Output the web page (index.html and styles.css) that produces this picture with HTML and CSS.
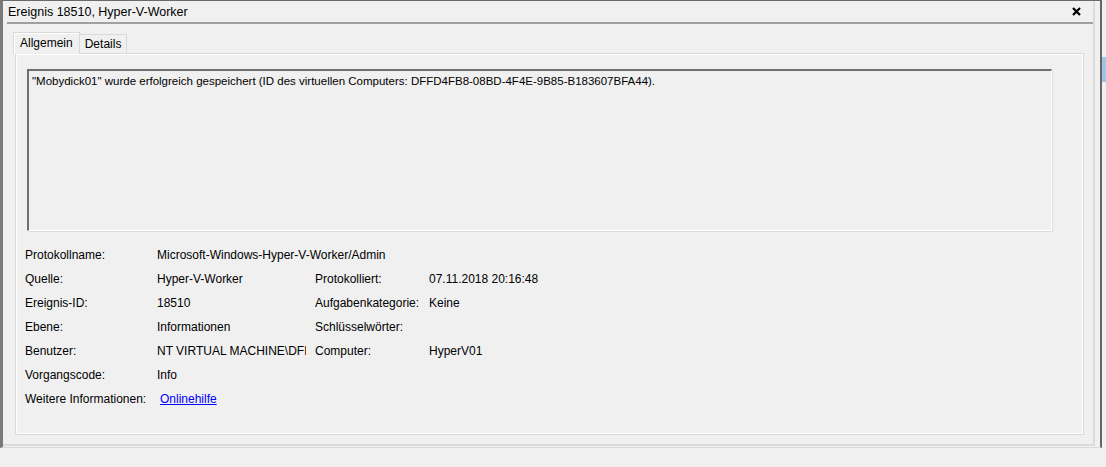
FILE: index.html
```html
<!DOCTYPE html>
<html lang="de">
<head>
  <meta charset="UTF-8" />
  <title>Ereignis 18510, Hyper-V-Worker</title>
  <link rel="stylesheet" href="styles.css">
</head>
<body>
  <div class="pane">
    <div class="frame">
      <div class="titlebar">
        <span class="title">Ereignis 18510, Hyper-V-Worker</span>
        <svg class="close" width="9" height="9" viewBox="0 0 9 9">
          <path d="M1 1 L8 8 M8 1 L1 8" stroke="#000" stroke-width="2.2" />
        </svg>
      </div>

      <div class="tabs">
        <div class="tab active">Allgemein</div>
        <div class="tab">Details</div>
      </div>

      <div class="panel">
        <div class="message">"Mobydick01" wurde erfolgreich gespeichert (ID des virtuellen Computers: DFFD4FB8-08BD-4F4E-9B85-B183607BFA44).</div>

        <div class="fields">
          <div class="label">Protokollname:</div>
          <div class="value wide">Microsoft-Windows-Hyper-V-Worker/Admin</div>

          <div class="label">Quelle:</div>
          <div class="value">Hyper-V-Worker</div>
          <div class="label">Protokolliert:</div>
          <div class="value">07.11.2018 20:16:48</div>

          <div class="label">Ereignis-ID:</div>
          <div class="value">18510</div>
          <div class="label">Aufgabenkategorie:</div>
          <div class="value">Keine</div>

          <div class="label">Ebene:</div>
          <div class="value">Informationen</div>
          <div class="label">Schlüsselwörter:</div>
          <div class="value"></div>

          <div class="label">Benutzer:</div>
          <div class="value clip">NT VIRTUAL MACHINE\DFFD4FB8-08BD</div>
          <div class="label">Computer:</div>
          <div class="value">HyperV01</div>

          <div class="label">Vorgangscode:</div>
          <div class="value wide">Info</div>

          <div class="label">Weitere Informationen:</div>
          <div class="value wide"><a href="#" class="link">Onlinehilfe</a></div>
        </div>
      </div>
    </div>
  </div>
  <div class="sidebar">
    <div class="thumb"></div>
  </div>
</body>
</html>
```

FILE: styles.css
```css
body {
  margin: 0;
  background: #f0f0f0;
  font-family: "Liberation Sans", Arial, sans-serif;
  font-size: 12px;
  color: #000;
  display: flex;
  align-items: flex-start;
}
.pane {
  width: 1097px;
  height: 446px;
  border-top: 1px solid #6a6a6a;
  border-left: 3px solid #7a7a7a;
  border-right: 2px solid #666;
  border-bottom: 1px solid #dadada;
}
.frame {
  height: 443px;
  margin-right: 5px;
  border-right: 2px solid #dcdcdc;
  border-bottom: 2px solid #dcdcdc;
  display: flex;
  flex-direction: column;
}
.titlebar {
  height: 21px;
  margin-left: 4px;
  padding: 0 12px 0 1px;
  border-bottom: 2px solid #a0a0a0;
  display: flex;
  align-items: center;
  justify-content: space-between;
}
.title {
  font-size: 12.5px;
  padding-top: 1px;
}
.tabs {
  display: flex;
  align-items: flex-end;
  margin: 8px 0 0 10px;
  height: 21px;
}
.tab {
  height: 18px;
  padding: 0 5px;
  line-height: 18px;
  border: 1px solid #d9d9d9;
  border-bottom: none;
  border-left: none;
  background: #f0f0f0;
}
.tab.active {
  height: 21px;
  line-height: 20px;
  padding: 0 6px;
  border-left: 1px solid #d9d9d9;
  box-shadow: inset 1px 1px 0 #fff;
  position: relative;
  top: 1px;
}
.panel {
  margin: 0 9px 0 12px;
  height: 365px;
  border: 1px solid #d9d9d9;
  box-shadow: inset 1px 1px 0 #fff, inset -1px -1px 0 #fff;
  padding: 15px 31px 0 11px;
}
.message {
  height: 151px;
  font-size: 11.5px;
  border-top: 2px solid #6f6f6f;
  border-left: 2px solid #6f6f6f;
  border-right: 1px solid #fff;
  border-bottom: 1px solid #fff;
  box-shadow: 1px 1px 0 #dcdcdc;
  padding: 4px 3px;
}
.fields {
  display: grid;
  grid-template-columns: 132px 158px 114px 1fr;
  grid-auto-rows: 24px;
  margin-top: 12px;
  margin-left: -2px;
}
.label,
.value {
  line-height: 24px;
  white-space: nowrap;
  min-width: 0;
}
.value.wide {
  grid-column: 2 / 5;
}
.value.clip {
  overflow: hidden;
  max-width: 149px;
}
.link {
  color: #0000ff;
  text-decoration: underline;
  margin-left: 3px;
}
.sidebar {
  width: 4px;
}
.thumb {
  margin-top: 57px;
  height: 25px;
  background: #a4c2e2;
}
```
